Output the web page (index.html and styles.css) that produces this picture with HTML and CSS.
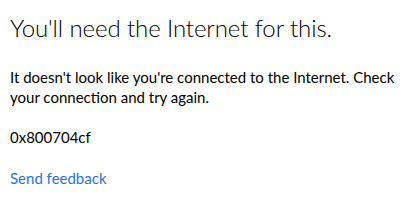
FILE: index.html
```html
<!DOCTYPE html>
<html lang="en">
<head>
<meta charset="utf-8">
<title>No Internet</title>
<link rel="stylesheet" href="styles.css">
</head>
<body>
<main class="page">
  <h1 class="title">You'll need the Internet for this.</h1>
  <p class="message">It doesn't look like you're connected to the Internet. Check your connection and try again.</p>
  <p class="code">0x800704cf</p>
  <a class="feedback" href="#">Send feedback</a>
</main>
</body>
</html>
```
FILE: styles.css
```css
html, body {
  margin: 0;
  padding: 0;
  background: #ffffff;
}
.page {
  display: flex;
  flex-direction: column;
  align-items: flex-start;
  padding: 12px 10px 0 10px;
  font-family: Lato, "Noto Sans", sans-serif;
  color: #000000;
}
.title {
  margin: 0;
  font-size: 24px;
  font-weight: 300;
  line-height: 32px;
  letter-spacing: -0.1px;
  color: #000000;
}
.message {
  margin: 23px 0 0 0;
  font-size: 15px;
  line-height: 20px;
}
.code {
  margin: 20px 0 0 0;
  font-size: 15px;
  line-height: 20px;
}
.feedback {
  margin-top: 21px;
  font-size: 15px;
  line-height: 20px;
  color: #1f74d5;
  text-decoration: none;
}
```
